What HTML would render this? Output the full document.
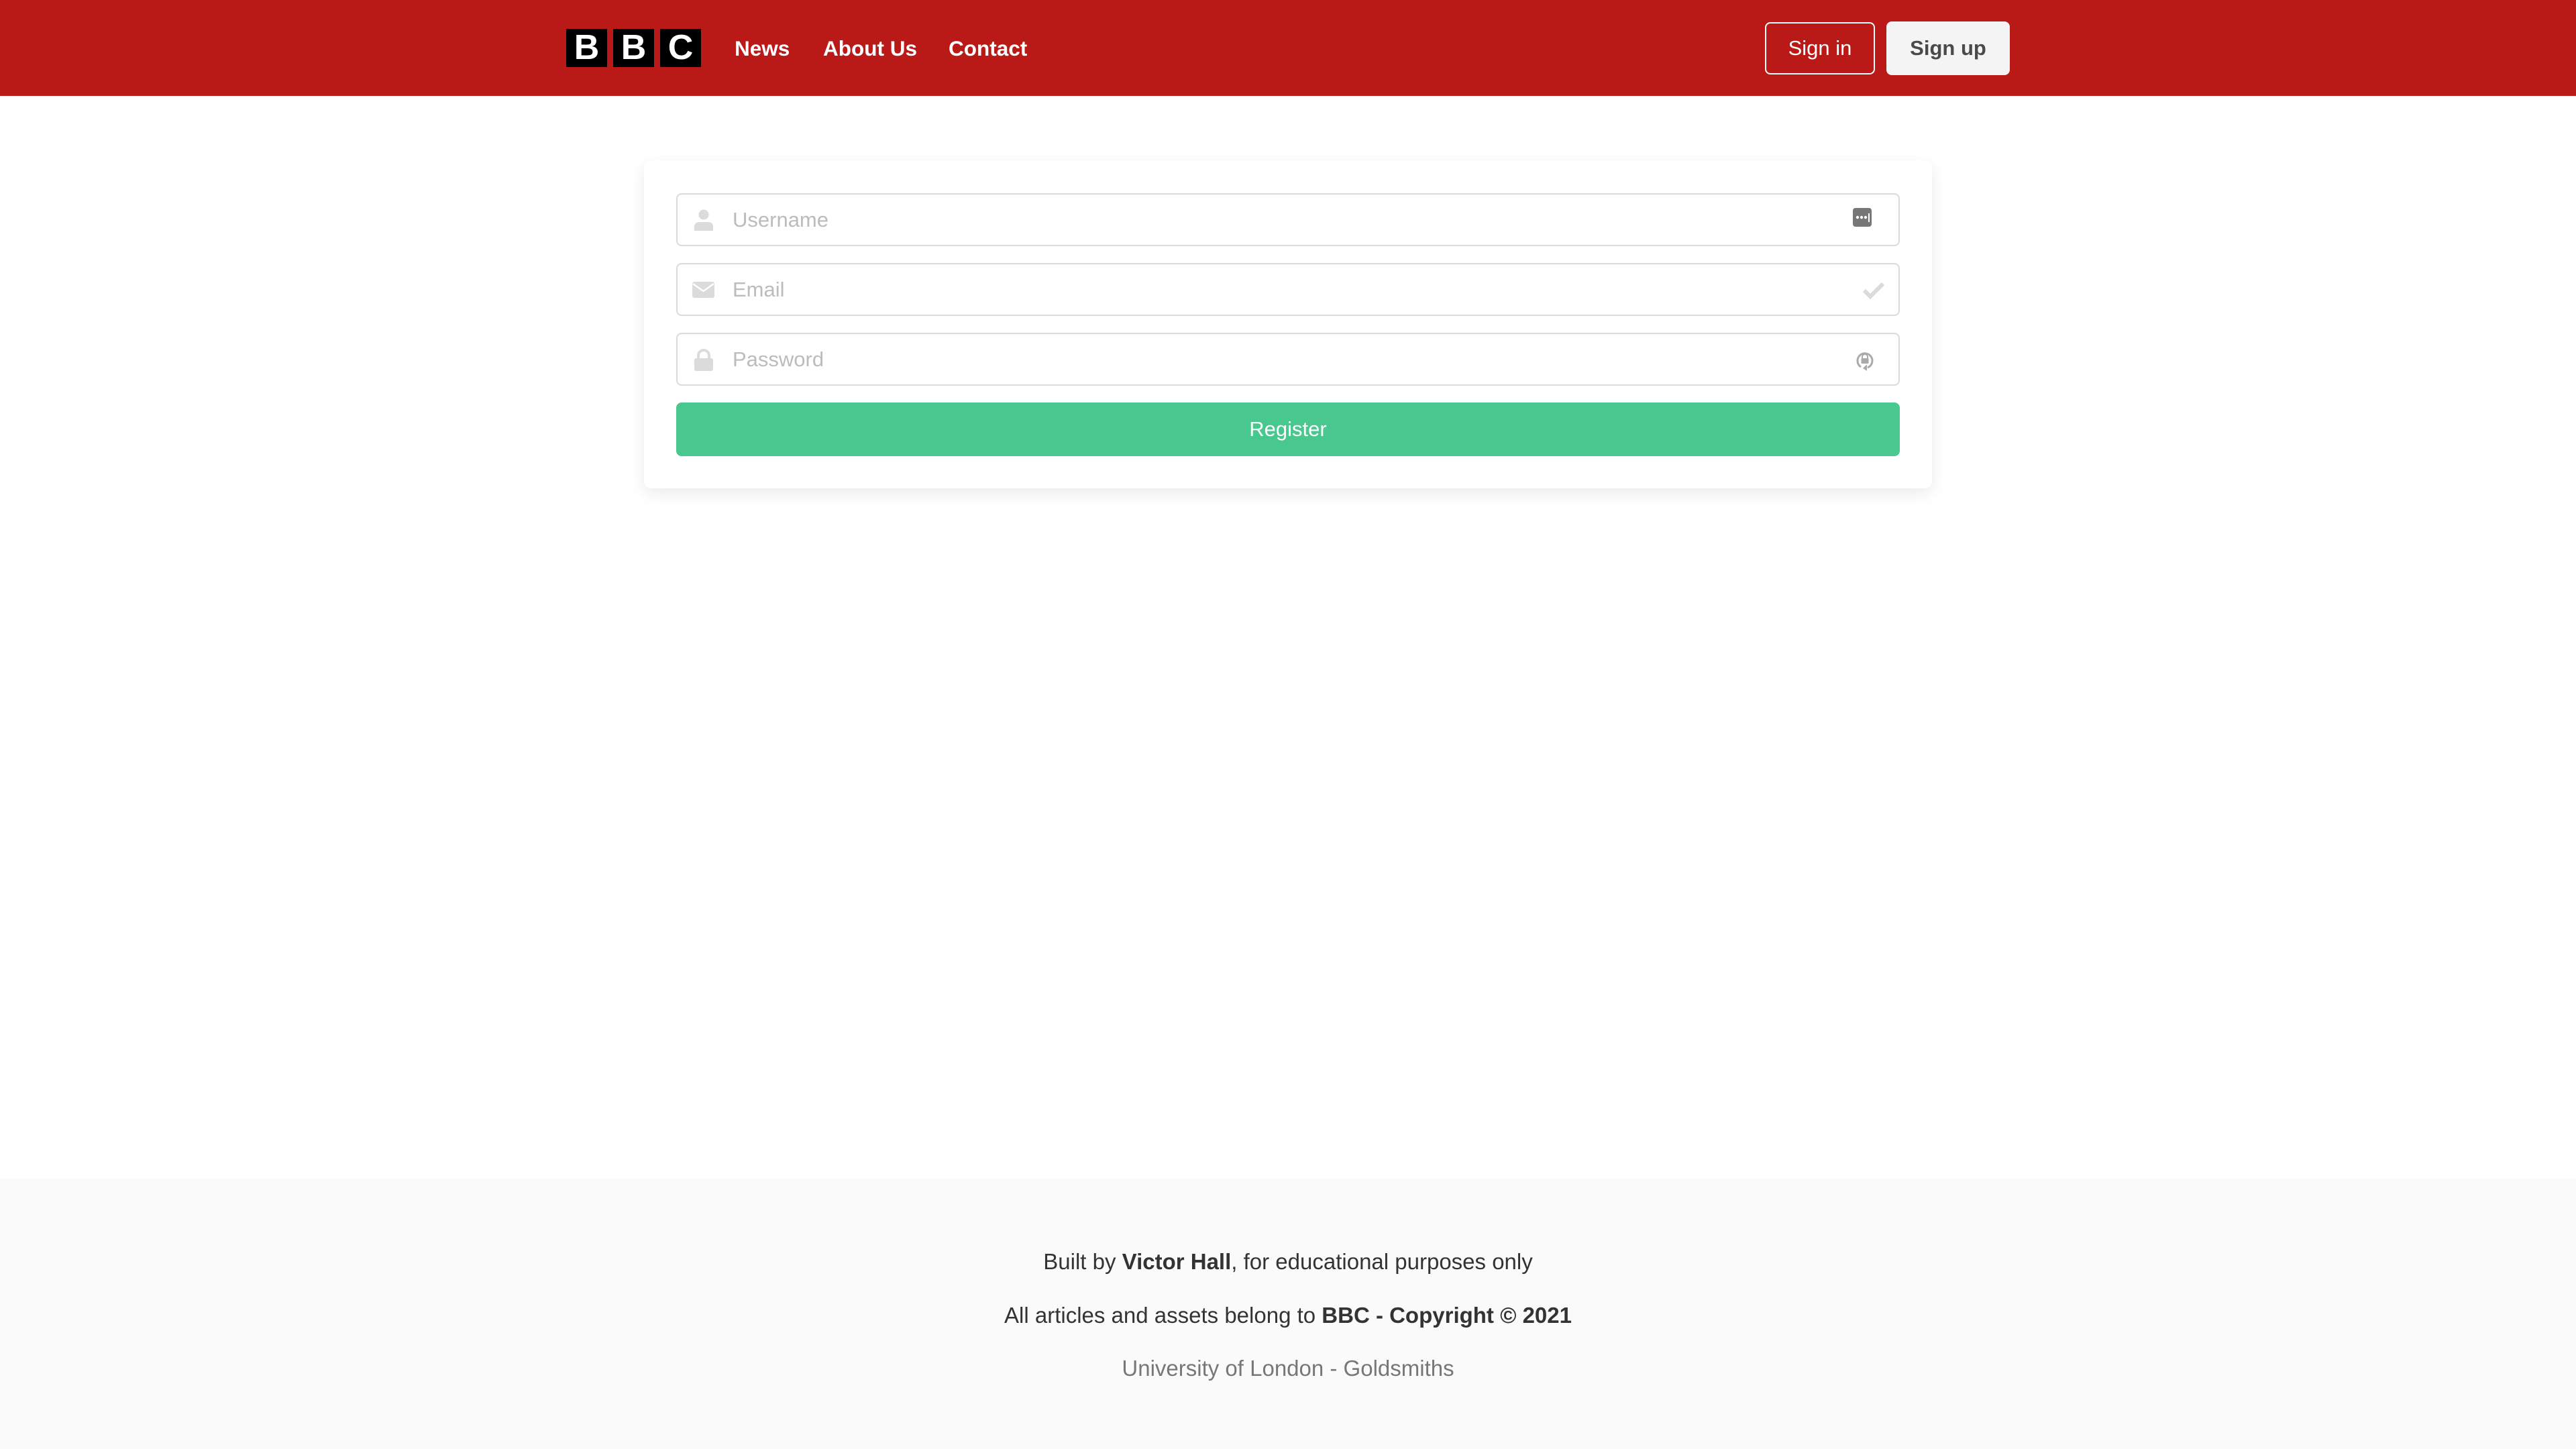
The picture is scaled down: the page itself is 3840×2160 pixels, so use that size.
<!DOCTYPE html>
<html><head><meta charset="utf-8"><style>
*{box-sizing:border-box;margin:0;padding:0}
html,body{width:3840px;height:2160px;overflow:hidden;background:#fff;font-family:"Liberation Sans",sans-serif}
.nav{position:absolute;left:0;top:0;width:3840px;height:143px;background:#b91a17}
.logo{position:absolute;top:43px;height:57px;width:61px;background:#000;color:#fff;font-weight:bold;font-size:52px;line-height:57px;text-align:center}
.nl{position:absolute;top:50px;color:#fff;font-weight:bold;font-size:31.5px;line-height:44px}
.btn{position:absolute;border-radius:8px;font-size:31px;text-align:center}
.card{position:absolute;left:960px;top:239px;width:1920px;height:489px;background:#fff;border-radius:10px;box-shadow:0 8px 24px rgba(10,10,10,.08),0 0 1px rgba(10,10,10,.06)}
.inp{position:absolute;left:1008px;width:1824px;height:79px;border:2px solid #dbdbdb;border-radius:8px;background:#fff;box-shadow:inset 0 1px 2px rgba(10,10,10,.04)}
.ph{position:absolute;left:82px;top:0;line-height:75px;font-size:31px;color:#bcbcbc}
.ic{position:absolute}
.reg{position:absolute;left:1008px;top:600px;width:1824px;height:80px;background:#48c78e;border-radius:8px;color:#fff;font-size:31px;line-height:80px;text-align:center}
.foot{position:absolute;left:0;top:1758px;width:3840px;height:402px;background:#fafafa;color:#333;font-size:33px;text-align:center}
.foot p{position:absolute;left:0;width:3840px}
</style></head><body>
<div class="nav">
  <div class="logo" style="left:844px">B</div>
  <div class="logo" style="left:914px">B</div>
  <div class="logo" style="left:984px">C</div>
  <div class="nl" style="left:1095px">News</div>
  <div class="nl" style="left:1227px">About Us</div>
  <div class="nl" style="left:1414px">Contact</div>
  <div class="btn" style="left:2631px;top:33px;width:164px;height:78px;border:2px solid #fff;color:#fff;line-height:74px">Sign in</div>
  <div class="btn" style="left:2812px;top:32px;width:184px;height:80px;background:#f4f4f4;color:#4a4a4a;font-weight:bold;line-height:80px">Sign up</div>
</div>
<div class="card"></div>
<div class="inp" style="top:288px">
  <svg class="ic" style="left:24px;top:22px" width="30" height="32" viewBox="0 0 30 32"><circle cx="15" cy="8" r="7.5" fill="#dbdbdb"/><path d="M1 32 V26 Q1 19 9 19 H21 Q29 19 29 26 V32 Z" fill="#dbdbdb"/></svg>
  <span class="ph">Username</span>
  <svg class="ic" style="left:1752px;top:20px" width="30" height="30" viewBox="0 0 30 30"><rect width="28" height="28" rx="4" fill="#777"/><circle cx="7" cy="14" r="2.2" fill="#fff"/><circle cx="13" cy="14" r="2.2" fill="#fff"/><circle cx="19" cy="14" r="2.2" fill="#fff"/><rect x="23" y="8" width="2" height="13" fill="#fff"/></svg>
</div>
<div class="inp" style="top:392px">
  <svg class="ic" style="left:22px;top:26px" width="34" height="26" viewBox="0 0 34 26"><rect width="33" height="24" rx="3" fill="#dbdbdb"/><path d="M1 3 L16.5 14 L32 3" stroke="#fff" stroke-width="2.5" fill="none"/></svg>
  <span class="ph">Email</span>
  <svg class="ic" style="left:1766px;top:26px" width="34" height="26" viewBox="0 0 34 26"><path d="M3 13 L12 22 L31 3" stroke="#dbdbdb" stroke-width="6" fill="none"/></svg>
</div>
<div class="inp" style="top:496px">
  <svg class="ic" style="left:24px;top:22px" width="30" height="34" viewBox="0 0 30 34"><path d="M7 14 V10 A8 8 0 0 1 23 10 V14" stroke="#dbdbdb" stroke-width="4" fill="none"/><rect x="1" y="14" width="28" height="19" rx="3" fill="#dbdbdb"/></svg>
  <span class="ph">Password</span>
  <svg class="ic" style="left:1755px;top:22px" width="30" height="34" viewBox="0 0 30 34"><path d="M9 27 A11 11 0 1 1 19 28" stroke="#aaa" stroke-width="3" fill="none"/><path d="M18 23 L12 29 L18 33 Z" fill="#aaa"/><path d="M11 14 V12 A4 4 0 0 1 19 12 V14" stroke="#aaa" stroke-width="2" fill="none"/><rect x="9.5" y="14" width="11" height="8" rx="1" fill="#aaa"/></svg>
</div>
<div class="reg">Register</div>
<div class="foot">
  <p style="top:104px">Built by <b>Victor Hall</b>, for educational purposes only</p>
  <p style="top:184px">All articles and assets belong to <b>BBC - Copyright © 2021</b></p>
  <p style="top:263px;color:#777">University of London - Goldsmiths</p>
</div>
</body></html>
